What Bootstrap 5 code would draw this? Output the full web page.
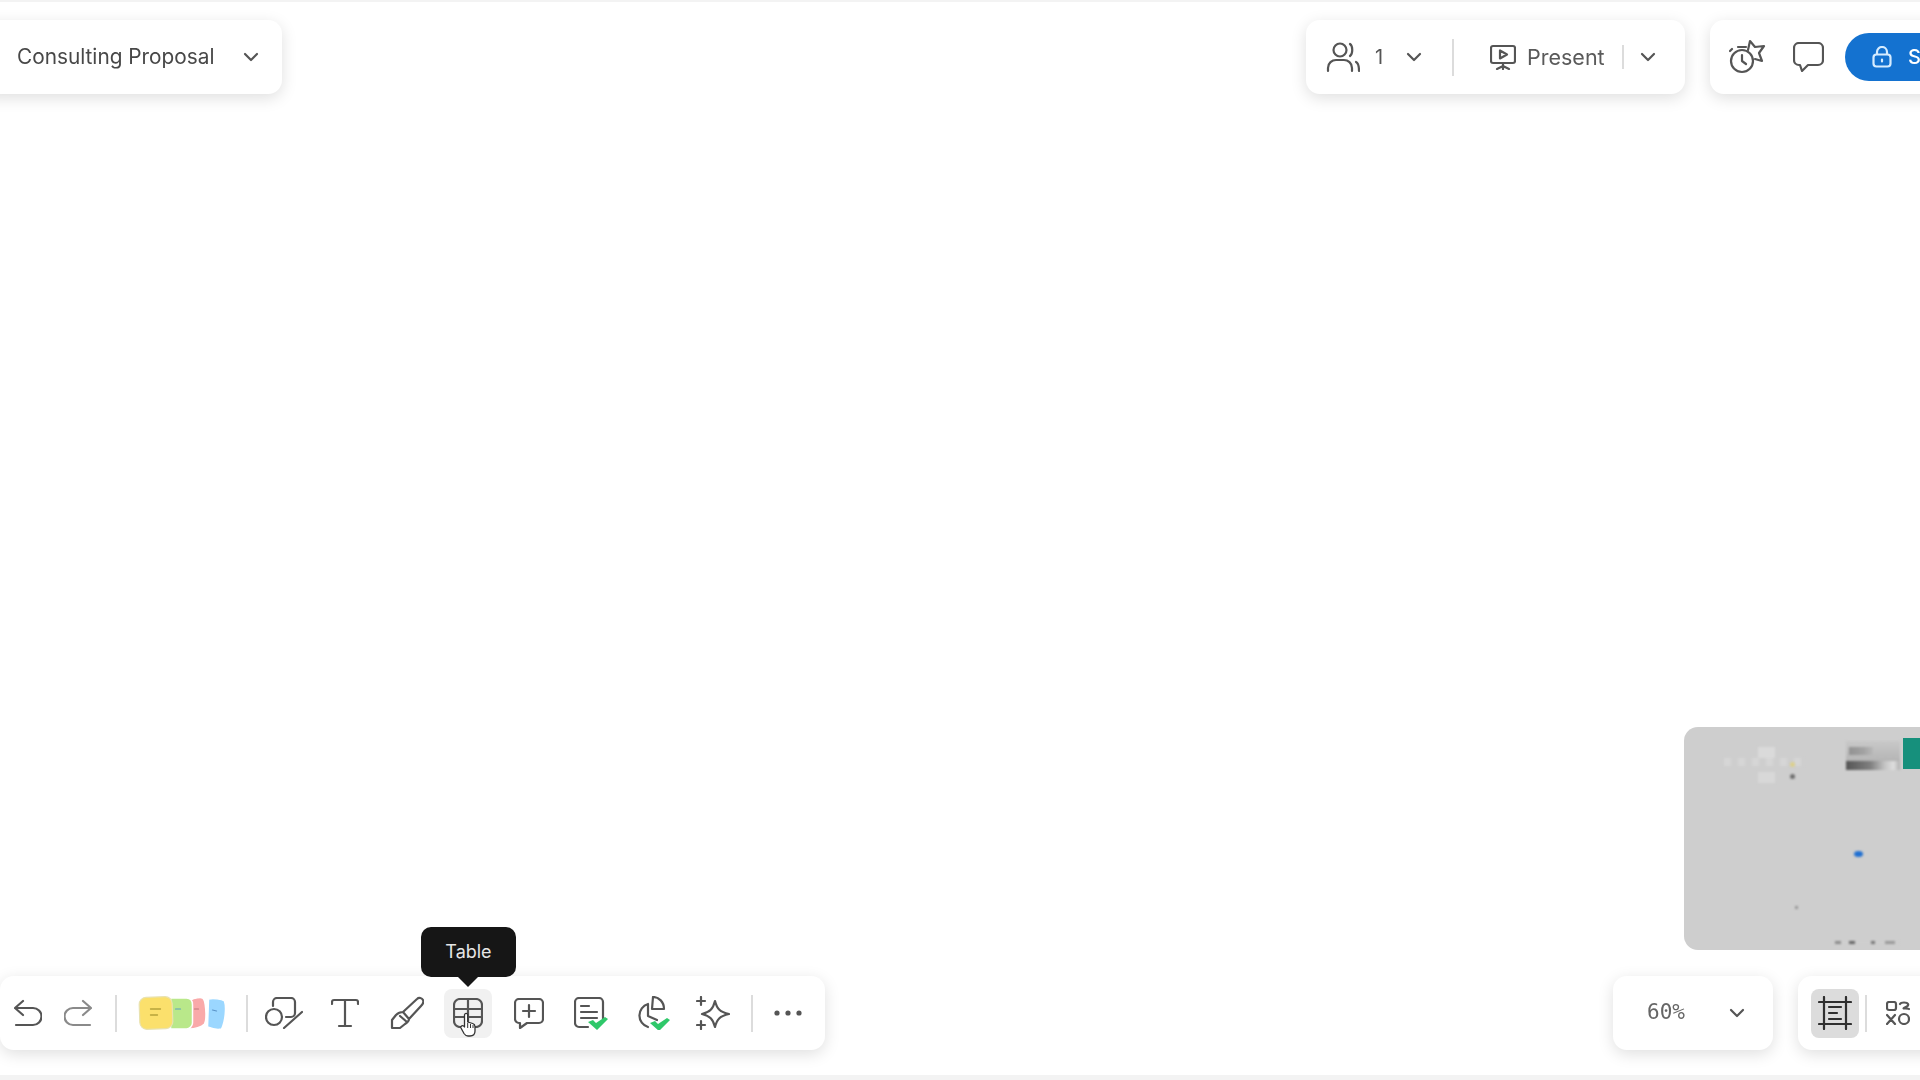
<!DOCTYPE html>
<html lang="en">
<head>
<meta charset="utf-8">
<title>Consulting Proposal</title>
<link href="https://cdn.jsdelivr.net/npm/bootstrap@5.3.0/dist/css/bootstrap.min.css" rel="stylesheet">
<style>
html,body{height:100%;margin:0;overflow:hidden;background:#fff}
body{font-family:Inter,"Liberation Sans",sans-serif;color:#4b4b4b}
.stage{width:1920px;height:1080px;border-top:2px solid #f3f3f3;padding-top:18px;filter:blur(.45px)}
.panel{height:74px;background:#fff;border-radius:14px;box-shadow:0 4px 16px rgba(0,0,0,.13)}
.left-panel{width:302px;margin-left:-20px;padding-left:37px}
.doc-name{font-size:20.8px;line-height:1;width:197px;white-space:nowrap;color:#484848}
.doc-chev{margin-left:29px}
.chev{flex:none;display:block}
.sep{flex:none;width:2px;background:#dcdcdc}
.sep-tall{height:37px}
.sep-short{height:24px}
.collab-panel{width:379px;padding-left:20px}
.action-panel{width:250px;margin-left:25px;margin-right:-40px;padding-left:19px}
.count{font-size:20px;margin:0 21px 0 15px;width:10px;color:#555}
.sep-collab{margin-left:30px}
.present-ico{margin-left:36px}
.present-label{font-size:21.5px;margin-left:11px;width:77px;color:#5a5a5a}
.sep-present{margin-left:18px}
.present-chev{margin-left:16px}
.comment-ico{margin-left:27px}
.share-btn{height:48px;width:140px;margin-left:21px;padding:0 0 0 27px;border:0;border-radius:24px 0 0 24px;background:#1472d0;color:#fff;font-size:20px;font-weight:500;gap:16px}
.share-btn:hover{background:#1472d0;color:#fff}
.canvas-area{height:882px}
.minimap{position:relative;width:260px;height:223px;margin:0 -24px 26px 0;background:#cecece;border-radius:14px;overflow:hidden}
.mini{position:absolute;filter:blur(1px)}
.m-teal{left:219px;top:11px;width:30px;height:31px;background:#16907c;filter:none}
.m-photo{left:162px;top:14px;width:54px;height:29px;background:linear-gradient(90deg,#555 0,#7f7f7f 45%,#c4c4c4 72%,#dedede 88%,#b0b0b0 100%) 0 100%/100% 9px no-repeat,linear-gradient(90deg,#929292 0,#a2a2a2 60%,#b8b8b8 100%) 3px 6px/24px 8px no-repeat,linear-gradient(180deg,#c8c8c8 0,#b8b8b8 60%,#a6a6a6 100%)}
.m-blue{left:170px;top:124px;width:9px;height:6px;border-radius:50%;background:#1f6fd1}
.m-card1{left:74px;top:20px;width:17px;height:16px;background:#dadada}
.m-card2{left:74px;top:45px;width:17px;height:11px;background:#d8d8d8}
.m-row{left:40px;top:31px;width:80px;height:8px;background:repeating-linear-gradient(90deg,#d6d6d6 0 7px,#cecece 7px 14px)}
.m-dot{left:106px;top:35px;width:5px;height:5px;border-radius:50%;background:#dcd08c}
.m-dark{left:106px;top:47px;width:5px;height:5px;border-radius:50%;background:#6e6e6e}
.m-foot{left:151px;top:214px;width:64px;height:3px;background:linear-gradient(90deg,#8c8c8c 0 6px,#cecece 6px 14px,#666 14px 20px,#cecece 20px 36px,#777 36px 40px,#cecece 40px 50px,#999 50px 60px,#cecece 60px)}
.m-speck{left:111px;top:179px;width:3px;height:3px;background:#999}
.tool-panel{width:825px;padding-left:4px}
.slot{flex:none;position:relative;width:48px;height:49px;border-radius:8px;border:0;padding:0;background:transparent}
.slot.is-hover{background:#f1f1f1}
.slot.is-on{background:#dcdcdc}
.slot-row{gap:13.33px;margin-left:12px}
.after-redo{margin-left:13px}
.redo-slot{margin-left:2px}
.sticker-ico{margin-left:19px}
.sep-sticker{margin-left:18px}
.sep-more{margin-left:14px}
.more-slot{margin-left:11px}
.tip{position:absolute;left:-23px;bottom:61px;width:95px;height:50px;background:#161616;color:#e6e6e6;border-radius:10px;font-size:18px;line-height:50px;text-align:center}
.tip::after{content:"";position:absolute;left:36.500px;top:49px;border:11px solid transparent;border-top-color:#161616;border-bottom:0}
.hand{position:absolute;left:16px;top:23px}
.zoom-panel{width:160px;padding-left:34px;margin-right:25px}
.zoom-val{font-family:"DejaVu Sans Mono",monospace;font-size:21px;width:48px;color:#666}
.zoom-chev{margin-left:34px}
.view-panel{width:160px;margin-right:-38px;padding-left:13px}
.sep-view{margin-left:6px;height:37px}
.view-ico{margin-left:19px}
.foot-band{height:5px;margin-top:25px;background:#f3f3f3}
.ico{fill:none;stroke:#555;stroke-width:2.2;stroke-linecap:round;stroke-linejoin:round;display:block;flex:none}
.ico-dark{stroke:#2f2f2f}
.ico-lite{stroke:#8a8a8a}
.ico-lock{stroke:#d6ecff}
.tick{fill:#2fc86a;stroke:none}
</style>
</head>
<body>
<div class="stage">
  <div class="d-flex justify-content-between align-items-start">
    <div class="panel left-panel d-flex align-items-center">
      <span class="doc-name">Consulting Proposal</span>
      <svg class="ico chev doc-chev" width="16" height="10" viewBox="0 0 16 10"><path d="M2 2l6 6 6-6"/></svg>
    </div>
    <div class="d-flex">
      <div class="panel collab-panel d-flex align-items-center">
        <svg class="ico" width="34" height="32" viewBox="0 0 34 32"><circle cx="14" cy="9" r="6.5"/><path d="M24 3c3 2 3 10 0 12M2 30v-3c0-5 4-8 8-8h8c4 0 8 3 8 8v3M30 21c2 1 3 4 3 9"/></svg>
        <span class="count">1</span>
        <svg class="ico chev" width="16" height="10" viewBox="0 0 16 10"><path d="M2 2l6 6 6-6"/></svg>
        <span class="sep sep-tall sep-collab"></span>
        <svg class="ico present-ico" width="26" height="26" viewBox="0 0 26 26"><rect x="1" y="2" width="24" height="17" rx="2"/><path d="M10 6.5v8l7-4zM13 19v3M7 25l6-3 6 3M13 22v3"/></svg>
        <span class="present-label">Present</span>
        <span class="sep sep-short sep-present"></span>
        <svg class="ico chev present-chev" width="16" height="10" viewBox="0 0 16 10"><path d="M2 2l6 6 6-6"/></svg>
      </div>
      <div class="panel action-panel d-flex align-items-center">
        <svg class="ico" width="37" height="36" viewBox="0 0 37 36"><circle cx="13" cy="22" r="11"/><path d="M13 16v6l4 3M9 8h8M3 10l-2 2"/><path d="M19 11l2-9 5 6 9-1-5 7 3 8-7-2"/></svg>
        <svg class="ico comment-ico" width="31" height="30" viewBox="0 0 31 30"><path d="M6 1h19a5 5 0 0 1 5 5v12a5 5 0 0 1-5 5H15l-6 6-2-6H6a5 5 0 0 1-5-5V6a5 5 0 0 1 5-5z"/></svg>
        <button type="button" class="btn share-btn d-flex align-items-center">
          <svg class="ico ico-lock" width="20" height="22" viewBox="0 0 20 22"><rect x="1.5" y="8.5" width="17" height="12" rx="3"/><path d="M5 8V6a5 5 0 0 1 10 0v2M10 13.5v2"/></svg>
          <span>S</span>
        </button>
      </div>
    </div>
  </div>

  <div class="canvas-area d-flex justify-content-end align-items-end">
    <div class="minimap">
      <div class="mini m-teal"></div>
      <div class="mini m-photo"></div>
      <div class="mini m-card1"></div>
      <div class="mini m-card2"></div>
      <div class="mini m-row"></div>
      <div class="mini m-dot"></div>
      <div class="mini m-dark"></div>
      <div class="mini m-blue"></div>
      <div class="mini m-speck"></div>
      <div class="mini m-foot"></div>
    </div>
  </div>

  <div class="d-flex justify-content-between">
    <div class="panel tool-panel d-flex align-items-center">
      <button type="button" class="slot d-flex align-items-center justify-content-center" aria-label="Undo">
        <svg class="ico" width="28" height="28" viewBox="0 0 28 28"><path d="M9 2L1 9l8 7M1 9h18a8 8 0 0 1 0 17H2"/></svg>
      </button>
      <button type="button" class="slot redo-slot d-flex align-items-center justify-content-center" aria-label="Redo">
        <svg class="ico ico-lite" width="28" height="28" viewBox="0 0 28 28"><path d="M19 2l8 7-8 7M27 9H9a8 8 0 0 0 0 17h17"/></svg>
      </button>
      <span class="sep sep-tall after-redo"></span>
      <svg class="ico sticker-ico" width="92" height="36" viewBox="0 0 87 36">
        <path d="M70 4c5-1 13 0 16 2 2 6 1 20-3 28-3 1-9 0-14-2z" fill="#9bd7ff" stroke="#fff" stroke-width="1.5"/>
        <path d="M52 5c4-2 10-3 12-2 3 1 5 20 2 26-3 3-10 5-15 5z" fill="#f9a9a9" stroke="#fff" stroke-width="1.5"/>
        <path d="M32 3h16c4 0 6 3 6 7v18c0 3-3 6-6 6H32z" fill="#b9e88a" stroke="#fff" stroke-width="1.5"/>
        <rect x="1" y="2" width="33" height="32" rx="7" transform="rotate(-2 17 18)" fill="#fbe06c" stroke="#e9e2b0" stroke-width="1.2"/>
        <path d="M12 14h10M12 20h7" stroke="#b6a23a" stroke-width="1.3"/>
        <path d="M37 14h5" stroke="#5d9ec0" stroke-width="1.2"/>
        <path d="M56 14h4" stroke="#c07a7a" stroke-width="1.2"/>
        <path d="M74 15l4 1" stroke="#5a93c7" stroke-width="1.2"/>
      </svg>
      <span class="sep sep-tall sep-sticker"></span>
      <div class="d-flex align-items-center slot-row">
        <button type="button" class="slot d-flex align-items-center justify-content-center" aria-label="Shape">
          <svg class="ico" width="38" height="32" viewBox="0 0 38 32"><path d="M8 9V5a4 4 0 0 1 4-4h14a4 4 0 0 1 4 4v11a4 4 0 0 1-4 4h-5"/><circle cx="9" cy="20" r="8"/><path d="M37 15L19 31"/></svg>
        </button>
        <button type="button" class="slot d-flex align-items-center justify-content-center" aria-label="Text">
          <svg class="ico" width="28" height="30" viewBox="0 0 28 30"><path d="M1 6V4a2 2 0 0 1 2-2h22a2 2 0 0 1 2 2v2M14 2v26M8 28h12"/></svg>
        </button>
        <button type="button" class="slot d-flex align-items-center justify-content-center" aria-label="Pen">
          <svg class="ico" width="34" height="34" viewBox="0 0 34 34"><path d="M13 16L27 3c2-2 5-1 6 1s0 4-2 6L19 23zM13 16c-3 0-5 1-7 3l-4 5v8h8l5-4c3-2 4-3 4-5zM10 20l7 6"/></svg>
        </button>
        <button type="button" class="slot is-hover d-flex align-items-center justify-content-center" aria-label="Table">
          <svg class="ico" width="30" height="30" viewBox="0 0 30 30"><rect x="1" y="1" width="28" height="28" rx="6"/><path d="M1 11h28M1 19h28M15 1v28"/></svg>
          <span class="tip">Table</span>
          <svg class="hand" width="16" height="25" viewBox="0 0 16 25"><path d="M4.5 13V3a1.6 1.6 0 0 1 3.2 0v7l5 1.5c1.5.5 2.3 1.5 2.3 3V19c0 3-2 5-5 5H8c-2 0-3-1-4-2.5L1 16c-1-2 2-3.5 3.500-1z" fill="#fff" stroke="#333" stroke-width="1.300" stroke-linejoin="round"/><path d="M7.700 11v5M10.500 12v4M13 13v3" stroke="#333" stroke-width="1" fill="none"/></svg>
        </button>
        <button type="button" class="slot d-flex align-items-center justify-content-center" aria-label="Comment">
          <svg class="ico" width="30" height="31" viewBox="0 0 30 31"><path d="M5 1h20a4 4 0 0 1 4 4v16a4 4 0 0 1-4 4H13l-7 5v-5H5a4 4 0 0 1-4-4V5a4 4 0 0 1 4-4z"/><path d="M15 7v12M9 13h12"/></svg>
        </button>
        <button type="button" class="slot d-flex align-items-center justify-content-center" aria-label="Checklist">
          <svg width="34" height="33" viewBox="0 0 34 33" class="ico"><path d="M14 30H5a4 4 0 0 1-4-4V5a4 4 0 0 1 4-4h20a4 4 0 0 1 4 4v17M7 9h8M7 15h16M7 21h16"/><path class="tick" d="M14 25l5-2 3 3 9-6 3 2-11 11z"/></svg>
        </button>
        <button type="button" class="slot d-flex align-items-center justify-content-center" aria-label="Chart">
          <svg width="36" height="34" viewBox="0 0 36 34" class="ico"><path d="M14 8a12 12 0 0 0 0 23M14 8v12l9 4"/><path d="M19 1c6 0 11 5 11 12H18z"/><path class="tick" d="M16 27l5-2 3 3 9-6 3 2-11 11z"/></svg>
        </button>
        <button type="button" class="slot d-flex align-items-center justify-content-center" aria-label="AI">
          <svg class="ico" width="34" height="34" viewBox="0 0 34 34"><path d="M19 5c2 8 5 11 14 13-9 2-12 5-14 13-2-8-5-11-13-13 8-2 11-5 13-13z"/><path d="M5 1v8M1 5h8M5 25v8M1 29h8"/></svg>
        </button>
      </div>
      <span class="sep sep-tall sep-more"></span>
      <button type="button" class="slot more-slot d-flex align-items-center justify-content-center" aria-label="More">
        <svg width="28" height="6" viewBox="0 0 28 6" class="d-block"><circle cx="3" cy="3" r="2.600" fill="#555"/><circle cx="14" cy="3" r="2.600" fill="#555"/><circle cx="25" cy="3" r="2.600" fill="#555"/></svg>
      </button>
    </div>
    <div class="d-flex">
      <div class="panel zoom-panel d-flex align-items-center">
        <span class="zoom-val">60%</span>
        <svg class="ico chev zoom-chev" width="16" height="10" viewBox="0 0 16 10"><path d="M2 2l6 6 6-6"/></svg>
      </div>
      <div class="panel view-panel d-flex align-items-center">
        <button type="button" class="slot is-on d-flex align-items-center justify-content-center" aria-label="Frames">
          <svg class="ico ico-dark" width="34" height="34" viewBox="0 0 34 34"><path d="M1 6h32M1 28h32M6 1v32M28 1v32M11 11h12M11 17h8M11 23h12"/></svg>
        </button>
        <span class="sep sep-view"></span>
        <svg class="ico view-ico" width="24" height="24" viewBox="0 0 24 24"><rect x="1" y="1" width="9" height="8" rx="2"/><path d="M14 3c1-2 7-2 8 0s-2 3-4 4 4 0 5 1M1 14l8 9M9 14l-8 9"/><circle cx="18" cy="18" r="5"/></svg>
      </div>
    </div>
  </div>
  <div class="foot-band"></div>
</div>
</body>
</html>
